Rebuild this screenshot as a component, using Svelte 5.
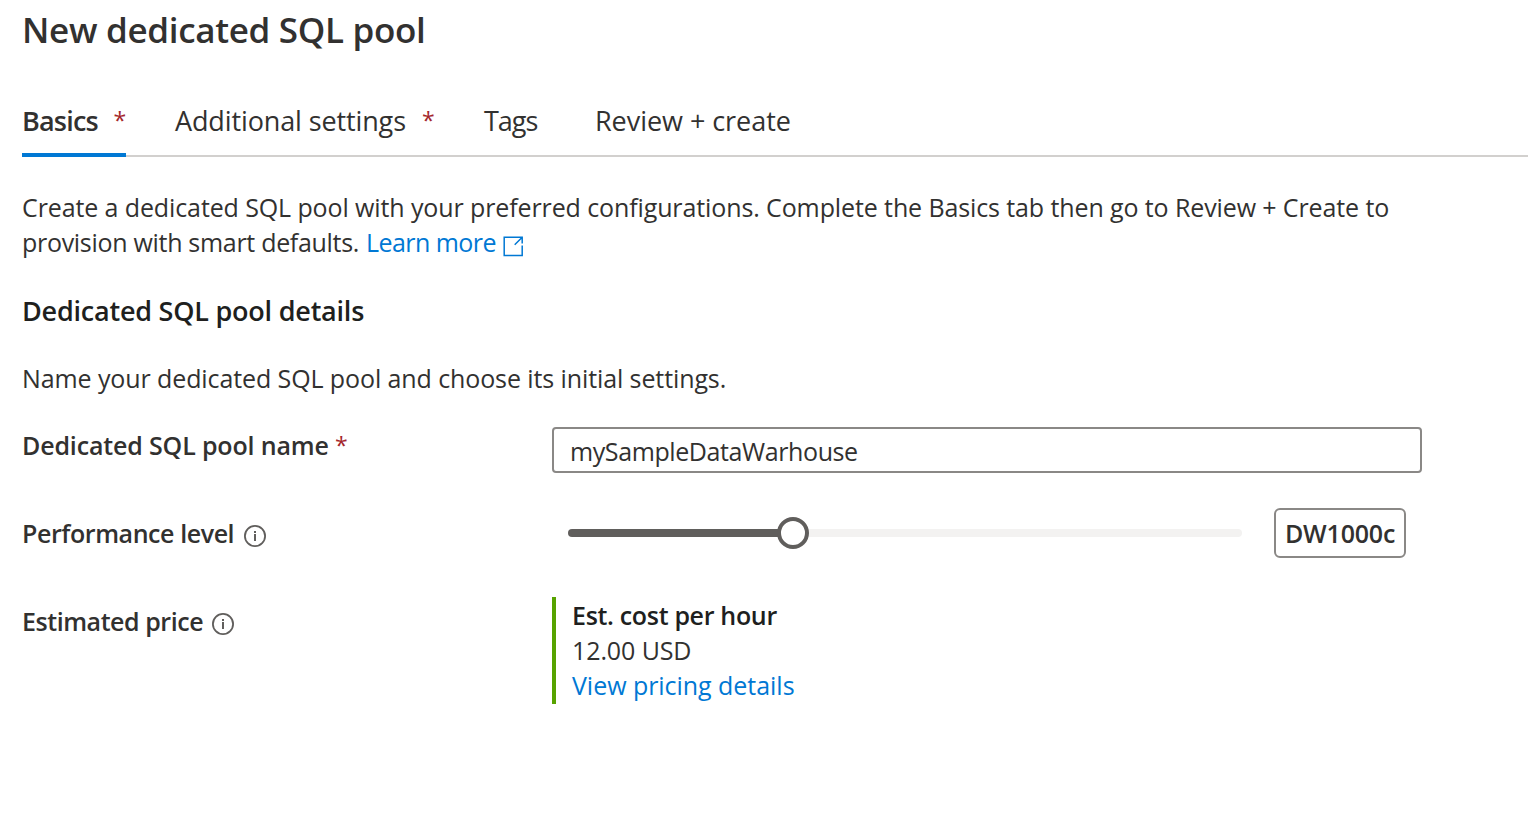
<script>
  let name = $state('mySampleDataWarhouse');
  const level = 'DW1000c';
  const percent = 33.4;
</script>

{#snippet info()}
  <svg class="info" width="22" height="22" viewBox="0 0 22 22" fill="none">
    <circle cx="11" cy="11" r="10.1" stroke="#605e5c" stroke-width="1.8" />
    <path d="M11 9v7" stroke="#605e5c" stroke-width="2" />
    <path d="M11 6v2" stroke="#605e5c" stroke-width="2" />
  </svg>
{/snippet}

<main>
  <h1>New dedicated SQL pool</h1>

  <nav>
    <a class="tab active" href="#basics"><span class="basics">Basics</span><span class="star">*</span></a>
    <a class="tab" href="#settings"><span class="settings">Additional settings</span><span class="star">*</span></a>
    <a class="tab tags" href="#tags">Tags</a>
    <a class="tab review" href="#review">Review + create</a>
  </nav>

  <p class="intro">
    <span class="first">Create a dedicated SQL pool with your preferred configurations. Complete the Basics tab then go to Review + Create to</span><br />
    <span class="second">provision with smart defaults.</span><a class="learn" href="#learn"><span>Learn more</span><svg width="21" height="21" viewBox="0 0 21 21" fill="none" stroke="#0078d4" stroke-width="1.5">
        <path d="M13 1.2H1.2v18.3h18V9.5M13 1.2h6.2v6.3M19.2 1.2l-7.5 7.5" />
      </svg></a>
  </p>

  <h2>Dedicated SQL pool details</h2>
  <p class="hint">Name your dedicated SQL pool and choose its initial settings.</p>

  <div class="form">
    <label class="label" for="pool"><span class="pool-name">Dedicated SQL pool name</span><span class="star">*</span></label>
    <input id="pool" bind:value={name} />

    <div class="label level"><span class="tight">Performance level</span>{@render info()}</div>
    <div class="performance">
      <div class="slider">
        <div class="filled" style="width: {percent}%"></div>
        <div class="thumb"></div>
        <div class="rest"></div>
      </div>
      <output>{level}</output>
    </div>

    <div class="label price"><span class="tight">Estimated price</span>{@render info()}</div>
    <div class="cost">
      <strong>Est. cost per hour</strong>
      <span>12.00 USD</span>
      <a href="#pricing">View pricing details</a>
    </div>
  </div>
</main>

<style>
  :global(body) { background: #fff; }
  main {
    box-sizing: border-box;
    height: 828px;
    padding: 5px 0 0 22px;
    overflow: hidden;
    color: #323130;
    font: 400 25px/35px "Open Sans", "Noto Sans", sans-serif;
    letter-spacing: -0.1px;
  }
  h1, h2, p { margin: 0; white-space: nowrap; }
  a { color: #0078d4; text-decoration: none; }
  h1 { font-size: 35px; line-height: 50px; font-weight: 600; letter-spacing: -0.32px; }
  nav {
    display: grid;
    grid-template-columns: 104px 260px 62px auto;
    column-gap: 49px;
    height: 54px;
    margin-top: 48px;
    background: linear-gradient(#d2d0ce, #d2d0ce) left bottom / 100% 2px no-repeat;
  }
  .tab { display: flex; align-items: flex-start; box-sizing: border-box; color: #323130; font-size: 27px; line-height: 36px; white-space: nowrap; }
  .active { border-bottom: 4px solid #0078d4; font-weight: 600; }
  .basics { width: 92px; letter-spacing: -0.8px; }
  .settings { width: 247px; letter-spacing: -0.12px; }
  .tags { letter-spacing: -1px; }
  .review { letter-spacing: -0.05px; }
  .star { color: #a4262c; font-size: 23px; line-height: 34px; font-weight: 400; }
  .intro { margin-top: 33px; }
  .first { letter-spacing: -0.11px; }
  .second { display: inline-block; width: 344px; letter-spacing: -0.3px; }
  .learn span { display: inline-block; width: 137px; letter-spacing: -0.55px; }
  .learn svg { vertical-align: -5px; }
  h2 { margin-top: 33px; color: #201f1e; font-size: 27px; line-height: 36px; font-weight: 600; letter-spacing: -0.22px; }
  .hint { margin-top: 32px; letter-spacing: -0.1px; }
  .form {
    display: grid;
    grid-template-columns: 530px 870px;
    grid-template-rows: 81px 89px 107px;
    align-items: start;
    margin-top: 31px;
  }
  .label { display: flex; align-items: flex-start; margin-top: 1px; font-weight: 600; letter-spacing: -0.15px; white-space: nowrap; }
  .level { margin-top: 8px; }
  .price { margin-top: 7px; }
  .pool-name { width: 313px; }
  .tight { letter-spacing: -0.42px; }
  .info { margin: 9px 0 0 10px; }
  .price .tight { letter-spacing: -0.45px; }
  .price :global(.info) { margin-left: 9px; }
  input {
    box-sizing: border-box;
    width: 870px;
    height: 46px;
    margin: 0;
    padding: 2px 16px 0;
    border: 2px solid #8a8886;
    border-radius: 4px;
    outline: 0;
    background: #fff;
    color: #323130;
    font: inherit;
    letter-spacing: -0.4px;
  }
  .performance { display: flex; align-items: center; padding-left: 16px; }
  .slider { display: flex; align-items: center; width: 674px; margin-right: 32px; }
  .filled { flex: none; height: 8px; border-radius: 4px; background: #605e5c; }
  .thumb { flex: none; box-sizing: border-box; width: 32px; height: 32px; margin-left: -16px; border: 4px solid #605e5c; border-radius: 50%; background: #fff; }
  .rest { flex: 1; height: 8px; border-radius: 0 4px 4px 0; background: #f3f2f1; }
  output { box-sizing: border-box; width: 132px; height: 50px; padding: 6px 0 0 9px; border: 2px solid #8a8886; border-radius: 6px; font-weight: 600; letter-spacing: -0.2px; }
  .cost { display: flex; flex-direction: column; box-sizing: border-box; height: 107px; padding: 1px 0 0 16px; border-left: 4px solid #57a300; }
  .cost strong { color: #201f1e; font-weight: 600; letter-spacing: -0.32px; }
  .cost a { letter-spacing: -0.04px; }
</style>
